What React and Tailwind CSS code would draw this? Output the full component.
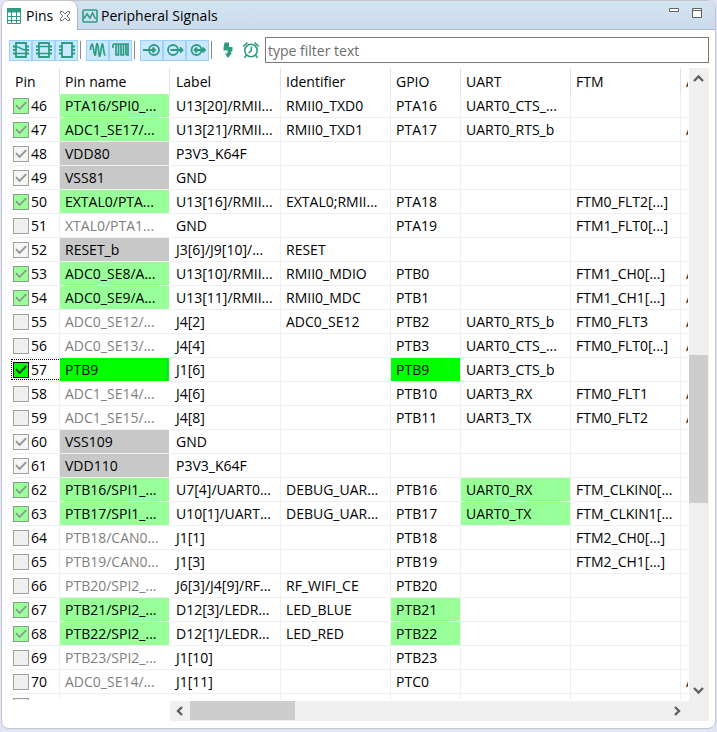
import clsx from 'clsx'

// hl: highlighted cell besides the name
// kind: "on" routed, "active" selected, "power" fixed pin, "off" free pin
const rows = [
  { pin: 46, kind: 'on', name: 'PTA16/SPI0_...', label: 'U13[20]/RMII...', id: 'RMII0_TXD0', gpio: 'PTA16', uart: 'UART0_CTS_...' },
  { pin: 47, kind: 'on', name: 'ADC1_SE17/...', label: 'U13[21]/RMII...', id: 'RMII0_TXD1', gpio: 'PTA17', uart: 'UART0_RTS_b', adc: 'A' },
  { pin: 48, kind: 'power', name: 'VDD80', label: 'P3V3_K64F' },
  { pin: 49, kind: 'power', name: 'VSS81', label: 'GND' },
  { pin: 50, kind: 'on', name: 'EXTAL0/PTA...', label: 'U13[16]/RMII...', id: 'EXTAL0;RMII...', gpio: 'PTA18', ftm: 'FTM0_FLT2[...]' },
  { pin: 51, kind: 'off', name: 'XTAL0/PTA1...', label: 'GND', gpio: 'PTA19', ftm: 'FTM1_FLT0[...]' },
  { pin: 52, kind: 'power', name: 'RESET_b', label: 'J3[6]/J9[10]/...', id: 'RESET' },
  { pin: 53, kind: 'on', name: 'ADC0_SE8/A...', label: 'U13[10]/RMII...', id: 'RMII0_MDIO', gpio: 'PTB0', ftm: 'FTM1_CH0[...]', adc: 'A' },
  { pin: 54, kind: 'on', name: 'ADC0_SE9/A...', label: 'U13[11]/RMII...', id: 'RMII0_MDC', gpio: 'PTB1', ftm: 'FTM1_CH1[...]', adc: 'A' },
  { pin: 55, kind: 'off', name: 'ADC0_SE12/...', label: 'J4[2]', id: 'ADC0_SE12', gpio: 'PTB2', uart: 'UART0_RTS_b', ftm: 'FTM0_FLT3', adc: 'A' },
  { pin: 56, kind: 'off', name: 'ADC0_SE13/...', label: 'J4[4]', gpio: 'PTB3', uart: 'UART0_CTS_...', ftm: 'FTM0_FLT0[...]', adc: 'A' },
  { pin: 57, kind: 'active', name: 'PTB9', label: 'J1[6]', gpio: 'PTB9', uart: 'UART3_CTS_b', hl: 'gpio' },
  { pin: 58, kind: 'off', name: 'ADC1_SE14/...', label: 'J4[6]', gpio: 'PTB10', uart: 'UART3_RX', ftm: 'FTM0_FLT1', adc: 'A' },
  { pin: 59, kind: 'off', name: 'ADC1_SE15/...', label: 'J4[8]', gpio: 'PTB11', uart: 'UART3_TX', ftm: 'FTM0_FLT2', adc: 'A' },
  { pin: 60, kind: 'power', name: 'VSS109', label: 'GND' },
  { pin: 61, kind: 'power', name: 'VDD110', label: 'P3V3_K64F' },
  { pin: 62, kind: 'on', name: 'PTB16/SPI1_...', label: 'U7[4]/UART0...', id: 'DEBUG_UAR...', gpio: 'PTB16', uart: 'UART0_RX', ftm: 'FTM_CLKIN0[...', hl: 'uart' },
  { pin: 63, kind: 'on', name: 'PTB17/SPI1_...', label: 'U10[1]/UART...', id: 'DEBUG_UAR...', gpio: 'PTB17', uart: 'UART0_TX', ftm: 'FTM_CLKIN1[...', hl: 'uart' },
  { pin: 64, kind: 'off', name: 'PTB18/CAN0...', label: 'J1[1]', gpio: 'PTB18', ftm: 'FTM2_CH0[...]' },
  { pin: 65, kind: 'off', name: 'PTB19/CAN0...', label: 'J1[3]', gpio: 'PTB19', ftm: 'FTM2_CH1[...]' },
  { pin: 66, kind: 'off', name: 'PTB20/SPI2_...', label: 'J6[3]/J4[9]/RF...', id: 'RF_WIFI_CE', gpio: 'PTB20' },
  { pin: 67, kind: 'on', name: 'PTB21/SPI2_...', label: 'D12[3]/LEDR...', id: 'LED_BLUE', gpio: 'PTB21', hl: 'gpio' },
  { pin: 68, kind: 'on', name: 'PTB22/SPI2_...', label: 'D12[1]/LEDR...', id: 'LED_RED', gpio: 'PTB22', hl: 'gpio' },
  { pin: 69, kind: 'off', name: 'PTB23/SPI2_...', label: 'J1[10]', gpio: 'PTB23' },
  { pin: 70, kind: 'off', name: 'ADC0_SE14/...', label: 'J1[11]', gpio: 'PTC0', adc: 'A' },
  { kind: 'off' },
]

const columns = [
  { key: 'label', title: 'Label' },
  { key: 'id', title: 'Identifier' },
  { key: 'gpio', title: 'GPIO' },
  { key: 'uart', title: 'UART' },
  { key: 'ftm', title: 'FTM' },
  { key: 'adc', title: 'A' },
]

const nameStyles = {
  on: 'bg-[#99ff99]',
  active: 'bg-[#00ff00]',
  power: 'bg-[#c8c8c8]',
  off: 'text-[#808080]',
}

const boxStyles = {
  on: 'bg-[#99ff99] border-[#8f9a8f]',
  active: 'bg-[#00ff00] border-black',
  power: 'bg-[#f5f5f5] border-[#a0a0a0]',
  off: 'bg-[#f0f0f0] border-[#a0a0a0]',
}

function PinCheckbox({ row }) {
  return (
    <label className="flex items-center gap-0.5 pl-[3px]">
      <span className="relative flex">
        <input
          type="checkbox"
          defaultChecked={row.kind !== 'off'}
          className={clsx('size-4 appearance-none border', boxStyles[row.kind])}
        />
        {row.kind !== 'off' && (
          <svg viewBox="0 0 16 16" className="pointer-events-none absolute inset-0 size-4" fill="none" stroke={row.kind === 'active' ? '#003000' : '#949494'} strokeWidth="1.8">
            <path d="M3 7.2 6.6 11 13.2 4.2" />
          </svg>
        )}
      </span>
      {row.pin}
    </label>
  )
}

function PinRow({ row }) {
  const active = row.kind === 'active'
  return (
    <tr className="h-6">
      <td className="relative border-b border-r border-[#efefef] p-0">
        <PinCheckbox row={row} />
        {active && <span className="pointer-events-none absolute inset-y-px left-px right-0 border-y border-l border-dotted border-black" />}
      </td>
      <td className={clsx('relative border-b border-b-[#efefef] border-r border-r-white bg-clip-padding pb-0 pl-[5px] pr-0 pt-px', nameStyles[row.kind])}>
        {row.name}
        {active && <span className="pointer-events-none absolute inset-y-px left-0 right-px border-y border-r border-dotted border-[#c050c0]" />}
      </td>
      {columns.map((col) => (
        <td
          key={col.key}
          className={clsx(
            'border-b border-r border-[#efefef] bg-clip-padding pb-0 pr-0 pt-px',
            col.key === 'label' ? 'pl-1.5' : 'pl-[5px]',
            row.hl === col.key && (active ? 'bg-[#00ff00]' : 'bg-[#99ff99]')
          )}
        >
          {row[col.key]}
        </td>
      ))}
    </tr>
  )
}

function PinTable() {
  return (
    <table className="w-[800px] table-fixed border-separate border-spacing-0 whitespace-nowrap leading-5">
      <colgroup>
        <col className="w-[50px]" />
        <col className="w-[110px]" />
        <col className="w-[111px]" />
        <col className="w-[110px]" />
        <col className="w-[70px]" />
        <col className="w-[110px]" />
        <col className="w-[110px]" />
        <col />
      </colgroup>
      <thead>
        <tr className="h-[26px] text-left">
          <th className="border-r border-[#e2e2e2] pb-0 pl-[5px] pr-0 pt-0.5 font-normal">Pin</th>
          <th className="border-r border-[#e2e2e2] pb-0 pl-[5px] pr-0 pt-0.5 font-normal">Pin name</th>
          {columns.map((col) => (
            <th key={col.key} className={clsx('border-r border-[#e2e2e2] pb-0 pr-0 pt-0.5 font-normal', col.key === 'label' ? 'pl-1.5' : 'pl-[5px]')}>
              {col.title}
            </th>
          ))}
        </tr>
      </thead>
      <tbody>
        {rows.map((row, i) => (
          <PinRow key={i} row={row} />
        ))}
      </tbody>
    </table>
  )
}

function Arrow({ d }) {
  return (
    <svg viewBox="0 0 20 20" className="size-5 shrink-0" fill="none" stroke="#606060" strokeWidth="2.4">
      <path d={d} />
    </svg>
  )
}

function ToolIcon({ children }) {
  return (
    <svg viewBox="0 0 18 18" className="size-[18px] shrink-0" fill="none" stroke="#2d9c82" strokeWidth="1.8">
      {children}
    </svg>
  )
}

const chip = <path d="M4 2h10v14H4zM1 5.500h3M1 9h3M1 12.500h3M14 5.500h3M14 9h3M14 12.500h3" />

const toolGroups = [
  [
    { name: 'Show dedicated pins', icon: <>{chip}<path d="M1 5.500h3c3 0 5 3.500 10 3.500M4 12.500h10" strokeWidth="1.500" /></> },
    { name: 'Show routed pins', icon: <>{chip}<path d="M4 5.500h10M4 12.500h10" strokeWidth="1.500" /></> },
    { name: 'Show unrouted pins', icon: chip },
  ],
  [
    { name: 'Analog signals', icon: <path d="M1.500 9C2 2 3.500 1 4.500 8S6.500 17 7 9s1.500-9 2.500 0 1.500 8 2.500 0 1.500-8 2.500-1 1 6 2 6" strokeWidth="1.700" /> },
    { name: 'Digital signals', icon: <path d="M1 3h3v11h2.500V3H9v11h2.500V3H14v11M1 3v4M4 3h13M16 3v11h-2" strokeWidth="1.700" /> },
  ],
  [
    { name: 'Input', icon: <><circle cx="11" cy="9" r="5" /><path d="M0 9h12.500M9.500 6.500 12 9l-2.500 2.500" /></> },
    { name: 'Output', icon: <><circle cx="7" cy="9" r="5" /><path d="M4.500 9h12M14 6.500 16.500 9 14 11.500" /></> },
    { name: 'Input/Output', icon: <><circle cx="7.500" cy="9" r="5" /><path d="M5 9h11M8 6.500 5.500 9 8 11.500M13.500 6.500 16 9l-2.500 2.500" /></> },
  ],
]

function Toolbar() {
  return (
    <div className="flex shrink-0 items-center pb-[5px] pl-[7px] pr-1.5 pt-[7px]">
      {toolGroups.map((group, i) => (
        <div key={i} className="flex items-center">
          <div className="flex">
            {group.map((tool) => (
              <button key={tool.name} type="button" aria-label={tool.name} className="flex h-[21px] w-[23px] items-center justify-center border border-[#99d1ff] bg-[#cce8ff]">
                <ToolIcon>{tool.icon}</ToolIcon>
              </button>
            ))}
          </div>
          <div className="ml-0.5 mr-[5px] h-[18px] w-px bg-[#8a8a8a]" />
        </div>
      ))}
      <button type="button" aria-label="Power" className="flex w-[22px] justify-center">
        <svg viewBox="0 0 18 18" className="size-[18px] shrink-0" fill="#2d9c82">
          <path d="M5.500 1.500h4.500v4.500h3.500v3.500l-2 2.500h1.500L9 17 6 12.500h2L9 9.500H4.500V7z" />
        </svg>
      </button>
      <button type="button" aria-label="Timing" className="flex w-6 justify-center">
        <ToolIcon>
          <g strokeWidth="1.600">
            <circle cx="9" cy="9.500" r="6.200" />
            <path d="M9.500 5.500 9 10l-2.500 2M1.200 5.500 5.500 1.500M16.800 5.500 12.500 1.500M4.500 14 2.500 16.700M13.500 14l2 2.700" />
          </g>
        </ToolIcon>
      </button>
      <input
        type="text"
        aria-label="Filter"
        placeholder="type filter text"
        className="ml-0.5 h-[26px] min-w-0 flex-1 border border-[#7a7a7a] bg-white px-0.5 outline-none placeholder:text-[#6d6d6d]"
      />
    </div>
  )
}

function TabBar() {
  return (
    <div className="flex h-[29px] shrink-0 items-stretch border-b border-[#b0b5cb] bg-linear-to-b from-[#d4e3f2] to-[#cbdcec]">
      <div className="-mb-px flex w-[76px] items-center rounded-tr-lg border-r border-[#b0b5cb] bg-white pl-[5px] pt-px">
        <svg viewBox="0 0 14 16" className="h-4 w-3.5 shrink-0">
          <path fill="#2d9c82" d="M0 0h14v4.500H0z" />
          <path fill="none" stroke="#2d9c82" d="M.5 4v11.500h13V4M0 8.500h14M0 12.500h14M4.500 4v12M9.500 4v12" />
        </svg>
        <button type="button" className="ml-[5px]">Pins</button>
        <button type="button" aria-label="Close" className="ml-1.5">
          <svg viewBox="0 0 12 12" className="size-3" fill="white" stroke="#707070">
            <path d="M1.500 1.500h2L6 4l2.500-2.500h2v2L8 6l2.500 2.500v2h-2L6 8l-2.500 2.500h-2v-2L4 6 1.500 3.500z" />
          </svg>
        </button>
      </div>
      <button type="button" className="flex items-center gap-[3px] pl-1 pt-0.5">
        <svg viewBox="0 0 16 14" className="h-3.5 w-4" fill="none" stroke="#2d9c82" strokeWidth="1.600">
          <rect x="1" y="1" width="14" height="12" rx="1" />
          <path d="M2 9.500 5 5l3 4 2.500-5 3 6" />
        </svg>
        Peripheral Signals
      </button>
      <div className="ml-auto flex items-start gap-3 pr-3 pt-[7px]">
        <button type="button" aria-label="Minimize">
          <svg viewBox="0 0 11 11" className="size-[11px]" fill="white" stroke="#606060">
            <path d="M.5.500h9v3h-9z" />
          </svg>
        </button>
        <button type="button" aria-label="Maximize">
          <svg viewBox="0 0 11 11" className="size-[11px]" fill="white" stroke="#606060">
            <path d="M.5.500h9v9h-9zM.5 2.500h9" />
          </svg>
        </button>
      </div>
    </div>
  )
}

export default function App() {
  return (
    <div className="flex h-screen flex-col bg-[#e0e4f5] pb-[3px] pl-px pr-px font-['Open_Sans','Noto_Sans',sans-serif] text-sm leading-5 text-black">
      <div className="flex min-h-0 flex-1 flex-col overflow-hidden rounded-lg border border-[#c4c6cc] bg-white">
        <TabBar />
        <Toolbar />
        <div className="flex min-h-0 flex-1 pb-[7px] pl-2 pr-1.5">
          <div className="flex min-w-0 flex-1 flex-col">
            <div className="mr-px min-h-0 flex-1 overflow-hidden">
              <PinTable />
            </div>
            <div className="ml-40 mt-px flex shrink-0 bg-[#f0f0f0]">
              <Arrow d="M12 6 8 10l4 4" />
              <div className="flex flex-1">
                <div className="h-[19px] w-[22%] bg-[#cdcdcd]" />
              </div>
              <Arrow d="M6 6l4 4-4 4" />
            </div>
          </div>
          <div className="flex w-5 shrink-0 flex-col bg-[#f0f0f0] pb-5">
            <Arrow d="M5 13l4.500-4.500L14 13" />
            <div className="flex flex-1 flex-col">
              <div className="grow-[45]" />
              <div className="mr-px grow-[25] bg-[#cdcdcd]" />
              <div className="grow-[30]" />
            </div>
            <Arrow d="M5 7l4.500 4.500L14 7" />
          </div>
        </div>
      </div>
    </div>
  )
}
